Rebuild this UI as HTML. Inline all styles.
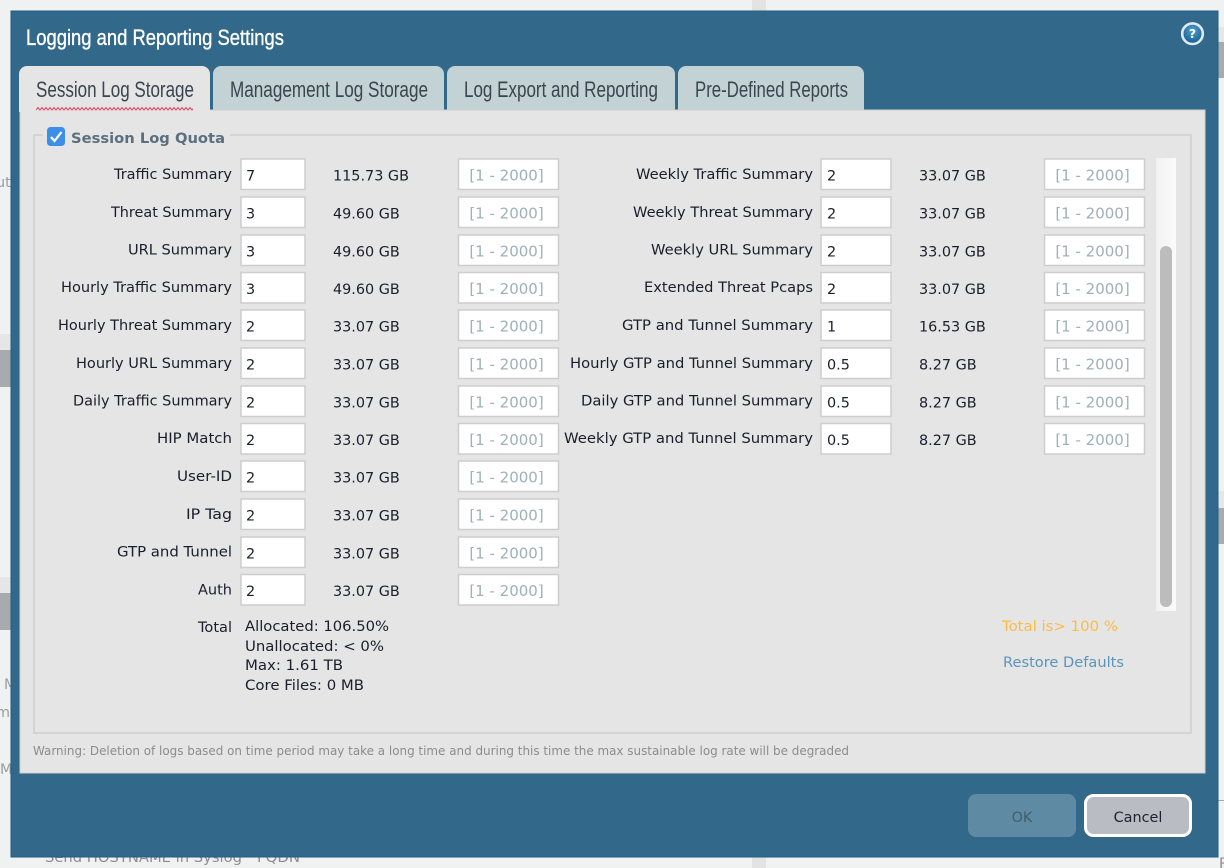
<!DOCTYPE html>
<html>
<head>
<meta charset="utf-8">
<title>Logging and Reporting Settings</title>
<style>
html,body{margin:0;padding:0;background:#f0f2f2}
body{width:1224px;height:868px;overflow:hidden}
svg{display:block;filter:blur(0.35px)}
text{font-family:"DejaVu Sans",sans-serif;font-size:14.4px;fill:#1a1e2a}
.h{font-family:"Liberation Sans",sans-serif}
.l{text-anchor:end;font-size:14.5px}
.r{fill:#9fb0ba;text-anchor:middle;font-size:15px}
.i{fill:#fff;stroke:#cdcdcd;stroke-width:1.5}
.t{font-family:"Liberation Sans",sans-serif;font-size:22px;fill:#3a4550}
</style>
</head>
<body>
<svg width="1224" height="868" viewBox="0 0 1224 868" xmlns="http://www.w3.org/2000/svg">
<defs>
<radialGradient id="hg" cx="50%" cy="35%" r="70%"><stop offset="0" stop-color="#55a0cf"/><stop offset="1" stop-color="#0b5688"/></radialGradient>
<linearGradient id="tr" x1="0" x2="1" y1="0" y2="0"><stop offset="0" stop-color="#f2f2f2"/><stop offset="1" stop-color="#fafafa"/></linearGradient>
<clipPath id="sq"><rect x="36" y="104" width="157" height="8"/></clipPath>
</defs>
<!-- background page -->
<rect width="1224" height="868" fill="#f0f2f2"/>
<rect x="752" y="0" width="14" height="12" fill="#e3e3e3"/>
<rect x="752" y="856" width="14" height="12" fill="#e3e3e3"/>
<rect x="0" y="334" width="12" height="16" fill="#e6e6e6"/>
<rect x="0" y="350" width="12" height="37" fill="#a8abad"/>
<rect x="0" y="577" width="12" height="16" fill="#e6e6e6"/>
<rect x="0" y="593" width="12" height="37" fill="#a8abad"/>
<rect x="1218" y="27" width="6" height="15" fill="#e6e6e6"/>
<rect x="1218" y="42" width="6" height="36" fill="#a8abad"/>
<rect x="1218" y="491" width="6" height="17" fill="#e6e6e6"/>
<rect x="1218" y="508" width="6" height="36" fill="#a8abad"/>
<rect x="1218" y="800" width="6" height="1" fill="#a8abad"/>
<text x="-4" y="187" style="fill:#9a9fa3">ute</text>
<text x="4" y="689" style="fill:#9a9fa3">M</text>
<text x="-4" y="717" style="fill:#9a9fa3">m</text>
<text x="0" y="774" style="fill:#9a9fa3">M</text>
<text x="45" y="862" style="fill:#8b8f93" textLength="197" lengthAdjust="spacingAndGlyphs">Send HOSTNAME in Syslog</text>
<text x="257" y="862" style="fill:#8b8f93" textLength="43" lengthAdjust="spacingAndGlyphs">FQDN</text>
<text x="1219" y="868" style="fill:#8b8f93">R</text>

<!-- dialog -->
<rect x="11" y="11" width="1207" height="846" fill="#32688a" stroke="#1c5f86" stroke-width="1"/>
<text class="h" x="26" y="45" style="font-size:22px;fill:#fff;stroke:#fff;stroke-width:.35" textLength="258" lengthAdjust="spacingAndGlyphs">Logging and Reporting Settings</text>

<!-- help -->
<circle cx="1192.500" cy="33.700" r="10.300" fill="url(#hg)" stroke="#dfe9ef" stroke-width="2.600"/>
<text x="1192.500" y="38.200" text-anchor="middle" style="font-size:12.500px;font-weight:bold;fill:#fff">?</text>

<!-- tabs -->
<path d="M213 110V74a8 8 0 0 1 8-8H436a8 8 0 0 1 8 8V110Z" fill="#c3d2d5"/>
<path d="M447 110V74a8 8 0 0 1 8-8H667a8 8 0 0 1 8 8V110Z" fill="#c3d2d5"/>
<path d="M678 110V74a8 8 0 0 1 8-8H856a8 8 0 0 1 8 8V110Z" fill="#c3d2d5"/>
<rect x="20" y="110" width="1185" height="663" fill="#e5e5e5" stroke="#cfcfcf" stroke-width="1"/>
<path d="M19 112V74a8 8 0 0 1 8-8H202a8 8 0 0 1 8 8V112Z" fill="#e5e5e5"/>
<text class="t" x="36" y="97" textLength="158" lengthAdjust="spacingAndGlyphs">Session Log Storage</text>
<text class="t" x="230" y="97" textLength="198" lengthAdjust="spacingAndGlyphs">Management Log Storage</text>
<text class="t" x="464" y="97" textLength="194" lengthAdjust="spacingAndGlyphs">Log Export and Reporting</text>
<text class="t" x="695" y="97" textLength="153" lengthAdjust="spacingAndGlyphs">Pre-Defined Reports</text>
<path clip-path="url(#sq)" d="M36 110l2-2.400 2 2.400 2-2.400 2 2.400 2-2.400 2 2.400 2-2.400 2 2.400 2-2.400 2 2.400 2-2.400 2 2.400 2-2.400 2 2.400 2-2.400 2 2.400 2-2.400 2 2.400 2-2.400 2 2.400 2-2.400 2 2.400 2-2.400 2 2.400 2-2.400 2 2.400 2-2.400 2 2.400 2-2.400 2 2.400 2-2.400 2 2.400 2-2.400 2 2.400 2-2.400 2 2.400 2-2.400 2 2.400 2-2.400 2 2.400 2-2.400 2 2.400 2-2.400 2 2.400 2-2.400 2 2.400 2-2.400 2 2.400 2-2.400 2 2.400 2-2.400 2 2.400 2-2.400 2 2.400 2-2.400 2 2.400 2-2.400 2 2.400 2-2.400 2 2.400 2-2.400 2 2.400 2-2.400 2 2.400 2-2.400 2 2.400 2-2.400 2 2.400 2-2.400 2 2.400 2-2.400 2 2.400 2-2.400 2 2.400 2-2.400 2 2.400 2-2.400 2 2.400 2-2.400 2 2.400 2-2.400 2 2.400 2-2.400 2 2.400 2-2.400" fill="none" stroke="#e0506a" stroke-width="1.100"/>

<!-- fieldset -->
<path d="M43 135H34V733H1191V135H230" fill="none" stroke="#cfcfcf" stroke-width="1.500"/>
<rect x="47" y="127" width="18" height="19" rx="3.500" fill="#3d8fe6"/>
<path d="M51 137l3.500 4 7-9" fill="none" stroke="#fff" stroke-width="2.200"/>
<text x="71" y="143" style="font-weight:bold;fill:#5c6f7e" textLength="154" lengthAdjust="spacingAndGlyphs">Session Log Quota</text>

<!-- inputs -->
<g class="i">
<rect x="241" y="159" width="64" height="30.500"/><rect x="241" y="197" width="64" height="30.500"/><rect x="241" y="235" width="64" height="30.500"/><rect x="241" y="272.500" width="64" height="30.500"/><rect x="241" y="310" width="64" height="30.500"/><rect x="241" y="348" width="64" height="30.500"/><rect x="241" y="386" width="64" height="30.500"/><rect x="241" y="423.500" width="64" height="30.500"/><rect x="241" y="461" width="64" height="30.500"/><rect x="241" y="499" width="64" height="30.500"/><rect x="241" y="537" width="64" height="30.500"/><rect x="241" y="574.500" width="64" height="30.500"/>
<rect x="458.500" y="159" width="100" height="30.500"/><rect x="458.500" y="197" width="100" height="30.500"/><rect x="458.500" y="235" width="100" height="30.500"/><rect x="458.500" y="272.500" width="100" height="30.500"/><rect x="458.500" y="310" width="100" height="30.500"/><rect x="458.500" y="348" width="100" height="30.500"/><rect x="458.500" y="386" width="100" height="30.500"/><rect x="458.500" y="423.500" width="100" height="30.500"/><rect x="458.500" y="461" width="100" height="30.500"/><rect x="458.500" y="499" width="100" height="30.500"/><rect x="458.500" y="537" width="100" height="30.500"/><rect x="458.500" y="574.500" width="100" height="30.500"/>
<rect x="821" y="159" width="70" height="30.500"/><rect x="821" y="197" width="70" height="30.500"/><rect x="821" y="235" width="70" height="30.500"/><rect x="821" y="272.500" width="70" height="30.500"/><rect x="821" y="310" width="70" height="30.500"/><rect x="821" y="348" width="70" height="30.500"/><rect x="821" y="386" width="70" height="30.500"/><rect x="821" y="423.500" width="70" height="30.500"/>
<rect x="1044.500" y="159" width="100" height="30.500"/><rect x="1044.500" y="197" width="100" height="30.500"/><rect x="1044.500" y="235" width="100" height="30.500"/><rect x="1044.500" y="272.500" width="100" height="30.500"/><rect x="1044.500" y="310" width="100" height="30.500"/><rect x="1044.500" y="348" width="100" height="30.500"/><rect x="1044.500" y="386" width="100" height="30.500"/><rect x="1044.500" y="423.500" width="100" height="30.500"/>
</g>

<!-- left labels -->
<text x="114" y="179" textLength="118" lengthAdjust="spacingAndGlyphs">Traffic Summary</text>
<text x="111" y="217" textLength="121" lengthAdjust="spacingAndGlyphs">Threat Summary</text>
<text x="128" y="254.500" textLength="104" lengthAdjust="spacingAndGlyphs">URL Summary</text>
<text x="61" y="292" textLength="171" lengthAdjust="spacingAndGlyphs">Hourly Traffic Summary</text>
<text x="58" y="330" textLength="174" lengthAdjust="spacingAndGlyphs">Hourly Threat Summary</text>
<text x="76" y="368" textLength="156" lengthAdjust="spacingAndGlyphs">Hourly URL Summary</text>
<text x="73" y="405.500" textLength="159" lengthAdjust="spacingAndGlyphs">Daily Traffic Summary</text>
<text x="157" y="443" textLength="75" lengthAdjust="spacingAndGlyphs">HIP Match</text>
<text x="177" y="481" textLength="55" lengthAdjust="spacingAndGlyphs">User-ID</text>
<text x="186" y="519" textLength="46" lengthAdjust="spacingAndGlyphs">IP Tag</text>
<text x="117" y="556.500" textLength="115" lengthAdjust="spacingAndGlyphs">GTP and Tunnel</text>
<text x="198" y="594.500" textLength="34" lengthAdjust="spacingAndGlyphs">Auth</text>

<g>
<text x="246" y="180.500">7</text><text x="246" y="218.500">3</text><text x="246" y="256.500">3</text><text x="246" y="294">3</text><text x="246" y="331.500">2</text><text x="246" y="369.500">2</text><text x="246" y="407.500">2</text><text x="246" y="445">2</text><text x="246" y="482.500">2</text><text x="246" y="520.500">2</text><text x="246" y="558.500">2</text><text x="246" y="596">2</text>
<text x="333" y="180.500">115.73 GB</text><text x="333" y="218.500">49.60 GB</text><text x="333" y="256.500">49.60 GB</text><text x="333" y="294">49.60 GB</text><text x="333" y="331.500">33.07 GB</text><text x="333" y="369.500">33.07 GB</text><text x="333" y="407.500">33.07 GB</text><text x="333" y="445">33.07 GB</text><text x="333" y="482.500">33.07 GB</text><text x="333" y="520.500">33.07 GB</text><text x="333" y="558.500">33.07 GB</text><text x="333" y="596">33.07 GB</text>
</g>
<g>
<text class="r" x="506.500" y="180.500">[1 - 2000]</text><text class="r" x="506.500" y="218.500">[1 - 2000]</text><text class="r" x="506.500" y="256.500">[1 - 2000]</text><text class="r" x="506.500" y="294">[1 - 2000]</text><text class="r" x="506.500" y="331.500">[1 - 2000]</text><text class="r" x="506.500" y="369.500">[1 - 2000]</text><text class="r" x="506.500" y="407.500">[1 - 2000]</text><text class="r" x="506.500" y="445">[1 - 2000]</text><text class="r" x="506.500" y="482.500">[1 - 2000]</text><text class="r" x="506.500" y="520.500">[1 - 2000]</text><text class="r" x="506.500" y="558.500">[1 - 2000]</text><text class="r" x="506.500" y="596">[1 - 2000]</text>
</g>

<!-- right labels -->
<text x="636" y="179" textLength="177" lengthAdjust="spacingAndGlyphs">Weekly Traffic Summary</text>
<text x="633" y="217" textLength="180" lengthAdjust="spacingAndGlyphs">Weekly Threat Summary</text>
<text x="651" y="254.500" textLength="162" lengthAdjust="spacingAndGlyphs">Weekly URL Summary</text>
<text x="644" y="292" textLength="169" lengthAdjust="spacingAndGlyphs">Extended Threat Pcaps</text>
<text x="622" y="330" textLength="191" lengthAdjust="spacingAndGlyphs">GTP and Tunnel Summary</text>
<text x="570" y="368" textLength="243" lengthAdjust="spacingAndGlyphs">Hourly GTP and Tunnel Summary</text>
<text x="581" y="405.500" textLength="232" lengthAdjust="spacingAndGlyphs">Daily GTP and Tunnel Summary</text>
<text x="564" y="443" textLength="249" lengthAdjust="spacingAndGlyphs">Weekly GTP and Tunnel Summary</text>

<text x="827" y="180.500">2</text><text x="827" y="218.500">2</text><text x="827" y="256.500">2</text><text x="827" y="294">2</text><text x="827" y="331.500">1</text><text x="827" y="369.500">0.5</text><text x="827" y="407.500">0.5</text><text x="827" y="445">0.5</text>
<text x="919" y="180.500">33.07 GB</text><text x="919" y="218.500">33.07 GB</text><text x="919" y="256.500">33.07 GB</text><text x="919" y="294">33.07 GB</text><text x="919" y="331.500">16.53 GB</text><text x="919" y="369.500">8.27 GB</text><text x="919" y="407.500">8.27 GB</text><text x="919" y="445">8.27 GB</text>
<text class="r" x="1092.500" y="180.500">[1 - 2000]</text><text class="r" x="1092.500" y="218.500">[1 - 2000]</text><text class="r" x="1092.500" y="256.500">[1 - 2000]</text><text class="r" x="1092.500" y="294">[1 - 2000]</text><text class="r" x="1092.500" y="331.500">[1 - 2000]</text><text class="r" x="1092.500" y="369.500">[1 - 2000]</text><text class="r" x="1092.500" y="407.500">[1 - 2000]</text><text class="r" x="1092.500" y="445">[1 - 2000]</text>

<!-- scrollbar -->
<rect x="1156" y="158" width="20" height="453" fill="url(#tr)"/>
<rect x="1160" y="246" width="12" height="361" rx="6" fill="#bcbcbc"/>

<!-- totals -->
<text x="198" y="632" textLength="34" lengthAdjust="spacingAndGlyphs">Total</text>
<text x="245" y="631" textLength="144" lengthAdjust="spacingAndGlyphs">Allocated: 106.50%</text>
<text x="245" y="651" textLength="139" lengthAdjust="spacingAndGlyphs">Unallocated: &lt; 0%</text>
<text x="245" y="670" textLength="98" lengthAdjust="spacingAndGlyphs">Max: 1.61 TB</text>
<text x="245" y="690" textLength="119" lengthAdjust="spacingAndGlyphs">Core Files: 0 MB</text>
<text x="1002" y="631" style="fill:#fcbb45" textLength="116" lengthAdjust="spacingAndGlyphs">Total is&gt; 100 %</text>
<text x="1003" y="667" style="fill:#5b95b9" textLength="121" lengthAdjust="spacingAndGlyphs">Restore Defaults</text>
<text x="33" y="755" style="font-size:12px;fill:#8c8c8c" textLength="816" lengthAdjust="spacingAndGlyphs">Warning: Deletion of logs based on time period may take a long time and during this time the max sustainable log rate will be degraded</text>

<!-- buttons -->
<rect x="968" y="794" width="108" height="43" rx="8" fill="#5f8aa3"/>
<text x="1022" y="822" text-anchor="middle" style="fill:#435c6d">OK</text>
<rect x="1085.500" y="795.500" width="105" height="40" rx="8" fill="#b9bcc2" stroke="#fff" stroke-width="3"/>
<text x="1138" y="822" text-anchor="middle" style="fill:#1d2230">Cancel</text>
</svg>
</body>
</html>
